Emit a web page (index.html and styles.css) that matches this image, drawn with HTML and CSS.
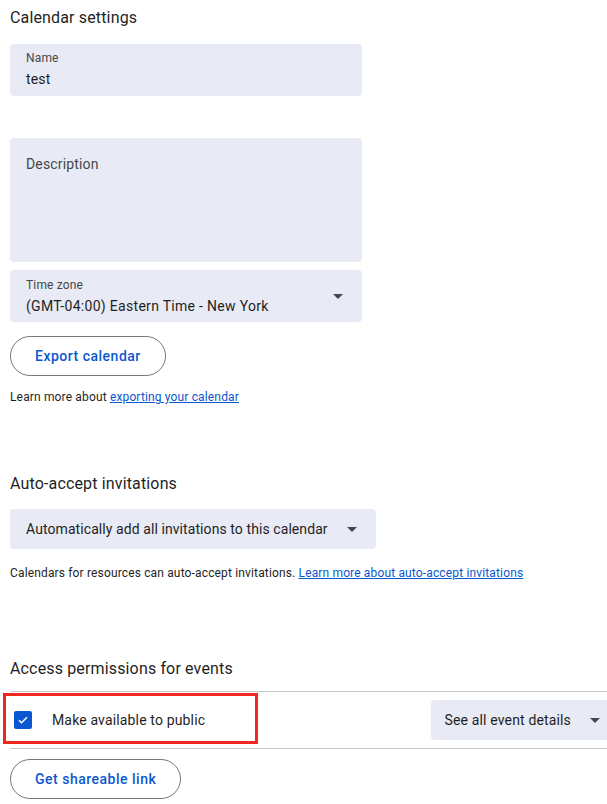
FILE: index.html
```html
<!DOCTYPE html>
<html lang="en">
<head>
    <meta charset="UTF-8">
    <title>Calendar settings</title>
    <link rel="stylesheet" href="styles.css">
</head>
<body>
<div class="page">
    <h2 class="title">Calendar settings</h2>
    <div class="field name">
        <div class="label">Name</div>
        <div class="value">test</div>
    </div>
    <div class="field desc">
        <div class="placeholder">Description</div>
    </div>
    <div class="field tz">
        <div class="tz-text">
            <div class="label">Time zone</div>
            <div class="value">(GMT-04:00) Eastern Time - New York</div>
        </div>
        <span class="arrow"></span>
    </div>
    <button class="pill export">Export calendar</button>
    <p class="hint learn">Learn more about <a href="#">exporting your calendar</a></p>

    <h2 class="title auto-title">Auto-accept invitations</h2>
    <div class="select auto">
        <span>Automatically add all invitations to this calendar</span>
        <span class="arrow"></span>
    </div>
    <p class="hint">Calendars for resources can auto-accept invitations. <a href="#">Learn more about auto-accept invitations</a></p>

    <h2 class="title access-title">Access permissions for events</h2>
    <div class="perm-row">
        <label class="check">
            <span class="box">
                <svg width="12" height="12" viewBox="0 0 24 24"><path d="M4 12.5l5 5L20 6.5" fill="none" stroke="#fff" stroke-width="3"/></svg>
            </span>
            <span>Make available to public</span>
        </label>
        <div class="select detail">
            <span>See all event details</span>
            <span class="arrow"></span>
        </div>
        <div class="mark"></div>
    </div>
    <button class="pill share">Get shareable link</button>
</div>
</body>
</html>
```

FILE: styles.css
```css
* {
    margin: 0;
    padding: 0;
    box-sizing: border-box;
}

body {
    font-family: Roboto, "Noto Sans", Arial, sans-serif;
    color: #1f1f1f;
    background: #fff;
    letter-spacing: 0.15px;
    overflow-x: hidden;
}

.page {
    padding: 6px 0 0 10px;
}

.title {
    font-size: 16px;
    font-weight: 400;
    line-height: 24px;
    color: #1f1f1f;
}

.field {
    width: 352px;
    background-color: #e8ebf5;
    border-radius: 4px;
    padding: 0 16px;
}

.label {
    font-size: 12px;
    line-height: 16px;
    color: #444746;
}

.value {
    font-size: 14px;
    line-height: 20px;
    margin-top: 3px;
}

.tz .value {
    letter-spacing: 0.3px;
}

.name {
    margin-top: 14px;
    height: 52px;
    padding-top: 6px;
}

.desc {
    margin-top: 42px;
    height: 124px;
    padding-top: 16px;
}

.placeholder {
    font-size: 14px;
    line-height: 20px;
    color: #444746;
}

.tz {
    margin-top: 8px;
    height: 52px;
    padding-top: 7px;
    padding-right: 12px;
    display: flex;
    justify-content: space-between;
}

.tz .arrow {
    margin-top: 7px;
}

.arrow {
    width: 24px;
    height: 24px;
    display: flex;
    align-items: center;
    justify-content: center;
    flex-shrink: 0;
}

.arrow::after {
    content: "";
    border-left: 5px solid transparent;
    border-right: 5px solid transparent;
    border-top: 5px solid #444746;
}

.pill {
    display: block;
    height: 40px;
    padding: 0 24px;
    border: 1px solid #747775;
    border-radius: 20px;
    background: #fff;
    font-family: inherit;
    font-size: 14px;
    font-weight: 500;
    letter-spacing: 0.5px;
    color: #0b57d0;
}

.export {
    margin-top: 14px;
}

.hint {
    font-size: 12px;
    line-height: 16px;
    color: #1f1f1f;
}

.hint a {
    color: #0b57d0;
}

.learn {
    margin-top: 13px;
}

.auto-title {
    margin-top: 67px;
}

.select {
    display: flex;
    align-items: center;
    height: 40px;
    background-color: #e8ebf5;
    border-radius: 4px;
    padding: 0 12px 0 16px;
    font-size: 14px;
}

.select .arrow {
    margin-left: 12px;
}

.auto {
    display: inline-flex;
    margin-top: 13px;
    letter-spacing: 0.08px;
}

.auto + .hint {
    margin-top: 16px;
}

.access-title {
    margin-top: 76px;
}

.perm-row {
    position: relative;
    display: flex;
    align-items: center;
    height: 58px;
    margin-top: 10px;
    margin-right: -12px;
    border-top: 1px solid #c4c7c5;
    border-bottom: 1px solid #c4c7c5;
}

.check {
    display: flex;
    align-items: center;
    font-size: 14px;
    padding-left: 4px;
}

.box {
    width: 18px;
    height: 18px;
    border-radius: 2px;
    background-color: #0b57d0;
    display: flex;
    align-items: center;
    justify-content: center;
    margin-right: 20px;
}

.detail {
    margin-left: auto;
    padding-left: 14px;
}

.mark {
    position: absolute;
    left: -7px;
    top: 1px;
    width: 255px;
    height: 51px;
    border: 3px solid #f0271e;
}

.share {
    margin-top: 10px;
}
```
